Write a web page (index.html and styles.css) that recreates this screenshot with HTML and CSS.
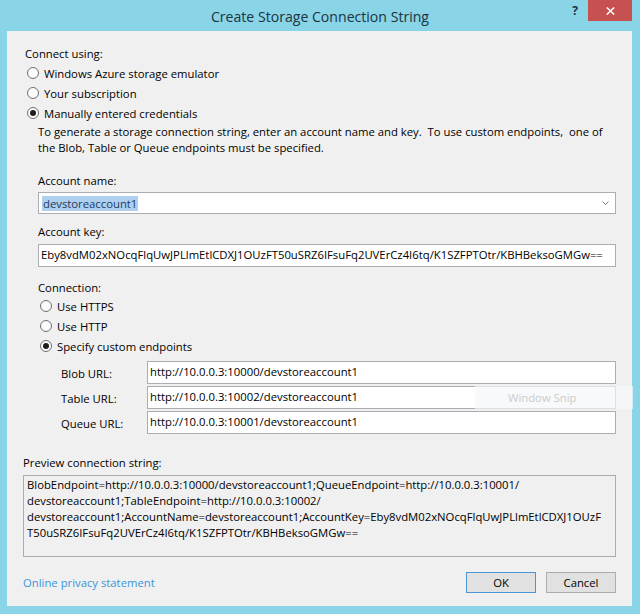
FILE: index.html
```html
<!DOCTYPE html>
<html lang="en">
<head>
<meta charset="utf-8">
<title>Create Storage Connection String</title>
<link rel="stylesheet" href="styles.css">
</head>
<body>
<div class="window">
  <div class="titlebar">
    <div class="title">Create Storage Connection String</div>
    <div class="controls">
      <div class="help">?</div>
      <div class="close">
        <svg width="9" height="8" viewBox="0 0 9 8"><path d="M0.8 0.5 L8.2 7.5 M8.2 0.5 L0.8 7.5" stroke="#fff" stroke-width="1.5" fill="none"/></svg>
      </div>
    </div>
  </div>
  <div class="client">
    <div class="lbl l-top">Connect using:</div>
    <div class="radios r-top">
      <div class="radio"><span class="radio-btn"></span>Windows Azure storage emulator</div>
      <div class="radio"><span class="radio-btn"></span>Your subscription</div>
      <div class="radio"><span class="radio-btn on"></span>Manually entered credentials</div>
    </div>
    <div class="desc">
      <div class="lbl">To generate a storage connection string, enter an account name and key.  To use custom endpoints,  one of</div>
      <div class="lbl">the Blob, Table or Queue endpoints must be specified.</div>
    </div>
    <div class="lbl indent l-name">Account name:</div>
    <div class="combo indent">
      <span class="sel">devstoreaccount1</span>
      <svg class="chev" width="7" height="4" viewBox="0 0 7 4"><path d="M0.5 0.5 L3.5 3.5 L6.5 0.5" stroke="#808080" stroke-width="1" fill="none"/></svg>
    </div>
    <div class="lbl indent l-key">Account key:</div>
    <div class="textbox indent key">Eby8vdM02xNOcqFlqUwJPLlmEtlCDXJ1OUzFT50uSRZ6IFsuFq2UVErCz4I6tq/K1SZFPTOtr/KBHBeksoGMGw==</div>
    <div class="lbl indent l-conn">Connection:</div>
    <div class="radios r-conn">
      <div class="radio"><span class="radio-btn"></span>Use HTTPS</div>
      <div class="radio"><span class="radio-btn"></span>Use HTTP</div>
      <div class="radio"><span class="radio-btn on"></span>Specify custom endpoints</div>
    </div>
    <div class="endpoints">
      <div class="ep-label">Blob URL:</div>
      <div class="textbox">http://10.0.0.3:10000/devstoreaccount1</div>
      <div class="ep-label">Table URL:</div>
      <div class="textbox">http://10.0.0.3:10002/devstoreaccount1</div>
      <div class="ep-label">Queue URL:</div>
      <div class="textbox">http://10.0.0.3:10001/devstoreaccount1</div>
    </div>
    <div class="lbl l-preview">Preview connection string:</div>
    <div class="preview">
      <div class="lbl">BlobEndpoint=http://10.0.0.3:10000/devstoreaccount1;QueueEndpoint=http://10.0.0.3:10001/</div>
      <div class="lbl">devstoreaccount1;TableEndpoint=http://10.0.0.3:10002/</div>
      <div class="lbl">devstoreaccount1;AccountName=devstoreaccount1;AccountKey=Eby8vdM02xNOcqFlqUwJPLlmEtlCDXJ1OUzF</div>
      <div class="lbl">T50uSRZ6IFsuFq2UVErCz4I6tq/K1SZFPTOtr/KBHBeksoGMGw==</div>
    </div>
    <div class="footer">
      <a class="link" href="#">Online privacy statement</a>
      <div class="buttons">
        <div class="btn default">OK</div>
        <div class="btn">Cancel</div>
      </div>
    </div>
  </div>
  <div class="snip">Window Snip</div>
</div>
</body>
</html>
```
FILE: styles.css
```css
html, body {
  margin: 0;
  padding: 0;
}

body {
  font-family: "Open Sans", "Noto Sans", sans-serif;
  font-size: 11.3px;
  color: #000;
}

.window {
  position: relative;
  width: 640px;
  height: 614px;
  background: #89d4e6;
  display: flex;
  flex-direction: column;
  overflow: hidden;
}

.titlebar {
  flex: none;
  height: 31px;
  display: grid;
  grid-template-columns: 1fr auto 1fr;
}

.title {
  grid-column: 2;
  font-size: 14.1px;
  line-height: 31px;
  padding-top: 1px;
  color: #1b3342;
  white-space: nowrap;
}

.controls {
  grid-column: 3;
  justify-self: end;
  display: flex;
  align-items: flex-start;
}

.help {
  width: 10px;
  margin: 4px 8px 0 0;
  font-weight: 700;
  font-size: 12px;
  line-height: 14px;
  text-align: center;
  color: #1d3444;
}

.close {
  width: 44px;
  height: 21px;
  margin-right: 8px;
  background: #c75050;
  display: flex;
  align-items: center;
  justify-content: center;
}

.close svg {
  display: block;
  margin-top: 1px;
}

.client {
  flex: 1;
  margin: 0 8px 8px 7px;
  padding: 15px 16px 13px 16px;
  background: #f0f0f0;
  display: flex;
  flex-direction: column;
}

.lbl {
  height: 16px;
  line-height: 16px;
  white-space: pre;
}

.l-top { margin-left: 2px; }

.radios {
  display: flex;
  flex-direction: column;
}

.r-top { margin: 1px 0 0 4px; }
.r-conn { margin-left: 17px; }

.radio {
  height: 20px;
  display: flex;
  align-items: center;
  gap: 5px;
  white-space: nowrap;
}

.radio-btn {
  width: 12px;
  height: 12px;
  box-sizing: border-box;
  border-radius: 50%;
  border: 1px solid #6f6f6f;
  background: #fcfcfc;
  display: flex;
  align-items: center;
  justify-content: center;
}

.radio-btn.on::after {
  content: "";
  width: 6px;
  height: 6px;
  border-radius: 50%;
  background: #1e1e1e;
}

.desc {
  margin: 1px 0 0 15px;
}

.indent { margin-left: 15px; }

.l-name { margin-top: 17px; }
.l-key { margin-top: 10px; }
.l-conn { margin-top: 13px; }

.combo {
  margin-top: 3px;
  height: 22px;
  box-sizing: border-box;
  border: 1px solid #abadb3;
  background: #fff;
  padding: 0 6px 0 3px;
  display: flex;
  align-items: center;
  justify-content: space-between;
}

.sel {
  background: #aecff0;
  color: #213b5c;
  line-height: 15px;
  padding: 0 1px 0 1px;
}

.chev { display: block; }

.textbox {
  height: 23px;
  box-sizing: border-box;
  border: 1px solid #abadb3;
  background: #fff;
  padding: 0 2px 2px 2px;
  display: flex;
  align-items: center;
  white-space: nowrap;
  overflow: hidden;
}

.key { margin-top: 4px; }

.endpoints {
  margin: 5px 0 0 38px;
  display: grid;
  grid-template-columns: 86px 1fr;
  grid-auto-rows: 23px;
  row-gap: 2px;
  align-items: center;
}

.ep-label {
  padding-top: 1px;
}

.l-preview { margin-top: 21px; }

.preview {
  margin-top: 4px;
  height: 82px;
  box-sizing: border-box;
  border: 1px solid #acacac;
  padding: 1px 3px;
  overflow: hidden;
}

.footer {
  margin-top: 15px;
  height: 21px;
  display: flex;
  align-items: center;
  justify-content: space-between;
}

.link {
  color: #3b94d9;
  text-decoration: none;
}

.buttons {
  display: flex;
  gap: 10px;
}

.btn {
  width: 70px;
  height: 21px;
  box-sizing: border-box;
  border: 1px solid #adadad;
  background: #e1e1e1;
  display: flex;
  align-items: center;
  justify-content: center;
}

.btn.default {
  border-color: #4b97d6;
}

.snip {
  position: absolute;
  left: 475px;
  top: 386px;
  width: 158px;
  height: 23px;
  box-sizing: border-box;
  padding-left: 33px;
  display: flex;
  align-items: center;
  background: rgba(244, 246, 248, 0.7);
  color: #cbcbcb;
  font-size: 11.3px;
}
```
